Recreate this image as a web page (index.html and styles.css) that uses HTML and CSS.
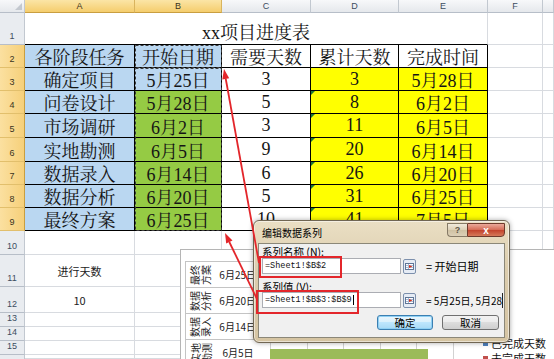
FILE: index.html
```html
<!DOCTYPE html>
<html>
<head>
    <title>xx项目进度表</title>
    <link rel="stylesheet" href="styles.css">
</head>
<body>
    <div class="sheet">
        <div class="c corner"></div><div class="c ch sel">A</div><div class="c ch sel">B</div><div class="c ch">C</div><div class="c ch">D</div><div class="c ch">E</div><div class="c ch">F</div><div class="c ch"></div>

        <div class="c rh">1</div><div class="c title">xx项目进度表</div><div class="c"></div><div class="c"></div>

        <div class="c rh sel">2</div><div class="c t blue">各阶段任务</div><div class="c t blue">开始日期</div><div class="c t">需要天数</div><div class="c t">累计天数</div><div class="c t">完成时间</div><div class="c"></div><div class="c"></div>

        <div class="c rh sel">3</div><div class="c t blue">确定项目</div><div class="c t blue">5月25日</div><div class="c t">3</div><div class="c t yel">3</div><div class="c t yel">5月28日</div><div class="c"></div><div class="c"></div>

        <div class="c rh sel">4</div><div class="c t blue">问卷设计</div><div class="c t green">5月28日</div><div class="c t">5</div><div class="c t yel err">8</div><div class="c t yel">6月2日</div><div class="c"></div><div class="c"></div>

        <div class="c rh sel">5</div><div class="c t blue">市场调研</div><div class="c t green">6月2日</div><div class="c t">3</div><div class="c t yel err">11</div><div class="c t yel">6月5日</div><div class="c"></div><div class="c"></div>

        <div class="c rh sel">6</div><div class="c t blue">实地勘测</div><div class="c t green">6月5日</div><div class="c t">9</div><div class="c t yel err">20</div><div class="c t yel">6月14日</div><div class="c"></div><div class="c"></div>

        <div class="c rh sel">7</div><div class="c t blue">数据录入</div><div class="c t green">6月14日</div><div class="c t">6</div><div class="c t yel err">26</div><div class="c t yel">6月20日</div><div class="c"></div><div class="c"></div>

        <div class="c rh sel">8</div><div class="c t blue">数据分析</div><div class="c t green">6月20日</div><div class="c t">5</div><div class="c t yel err">31</div><div class="c t yel">6月25日</div><div class="c"></div><div class="c"></div>

        <div class="c rh sel">9</div><div class="c t blue">最终方案</div><div class="c t green">6月25日</div><div class="c t">10</div><div class="c t yel err">41</div><div class="c t yel">7月5日</div><div class="c"></div><div class="c"></div>

        <div class="c rh">10</div><div class="c"></div><div class="c"></div><div class="c"></div><div class="c"></div><div class="c"></div><div class="c"></div><div class="c"></div>

        <div class="c rh">11</div><div class="c sm">进行天数</div><div class="c"></div><div class="c"></div><div class="c"></div><div class="c"></div><div class="c"></div><div class="c"></div>

        <div class="c rh">12</div><div class="c sm">10</div><div class="c"></div><div class="c"></div><div class="c"></div><div class="c"></div><div class="c"></div><div class="c"></div>

        <div class="c rh">13</div><div class="c"></div><div class="c"></div><div class="c"></div><div class="c"></div><div class="c"></div><div class="c"></div><div class="c"></div>
        <div class="c rh">14</div><div class="c"></div><div class="c"></div><div class="c"></div><div class="c"></div><div class="c"></div><div class="c"></div><div class="c"></div>
        <div class="c rh">15</div><div class="c"></div><div class="c"></div><div class="c"></div><div class="c"></div><div class="c"></div><div class="c"></div><div class="c"></div>
        <div class="c rh last"></div><div class="c"></div><div class="c"></div><div class="c"></div><div class="c"></div><div class="c"></div><div class="c"></div><div class="c"></div>
    </div>

    <!-- chart that sits on the sheet -->
    <div class="chart">
        <div class="cats">
            <div class="cat"><div class="cat-name"><div class="rot">最终方案</div></div><div class="cat-date">6月25日</div></div>
            <div class="cat"><div class="cat-name"><div class="rot">数据分析</div></div><div class="cat-date">6月20日</div></div>
            <div class="cat"><div class="cat-name"><div class="rot">数据录入</div></div><div class="cat-date">6月14日</div></div>
            <div class="cat"><div class="cat-name"><div class="rot">实地勘测</div></div><div class="cat-date">6月5日</div></div>
        </div>
        <div class="plot">
            <div class="grid-lines">
                <div class="bar-row"></div>
                <div class="bar-row"></div>
                <div class="bar-row"></div>
                <div class="bar-row"><div class="bar" style="width: 158px"></div></div>
            </div>
        </div>
        <div class="legend">
            <div class="leg"><span class="mark blue-mark"></span>已完成天数</div>
            <div class="leg"><span class="mark red-mark"></span>未完成天数</div>
        </div>
    </div>

    <!-- edit series dialog -->
    <div class="dialog">
        <div class="dlg-title">
            <span>编辑数据系列</span>
            <div class="dlg-btns">
                <div class="btn-help">?</div>
                <div class="btn-close">x</div>
            </div>
        </div>
        <div class="dlg-body">
            <div class="lbl">系列名称 (<u>N</u>):</div>
            <div class="field-row">
                <div class="field">=Sheet1!$B$2</div>
                <div class="ref-btn">
                    <svg width="13" height="15" viewBox="0 0 13 15"><rect x="0.5" y="0.5" width="12" height="14" rx="1.5" fill="#e6ecf5" stroke="#7d90ad"/><rect x="2.5" y="4.5" width="8" height="6" fill="#fff" stroke="#5f7697"/><path d="M3 6.5h7M3 8.5h7M5.5 5v5" stroke="#a9b9d2"/><path d="M6 6l3.5 1.5L6 9z" fill="#d8301c"/></svg>
                </div>
                <div class="value">= 开始日期</div>
            </div>
            <div class="lbl lbl2">系列值 (<u>V</u>):</div>
            <div class="field-row">
                <div class="field">=Sheet1!$B$3:$B$9<span class="caret"></span></div>
                <div class="ref-btn">
                    <svg width="13" height="15" viewBox="0 0 13 15"><rect x="0.5" y="0.5" width="12" height="14" rx="1.5" fill="#e6ecf5" stroke="#7d90ad"/><rect x="2.5" y="4.5" width="8" height="6" fill="#fff" stroke="#5f7697"/><path d="M3 6.5h7M3 8.5h7M5.5 5v5" stroke="#a9b9d2"/><path d="M6 6l3.5 1.5L6 9z" fill="#d8301c"/></svg>
                </div>
                <div class="value clip">= 5月25日, 5月28日, 6月2日</div>
            </div>
            <div class="dlg-actions">
                <button class="push focus">确定</button>
                <button class="push">取消</button>
            </div>
        </div>
    </div>

    <!-- selection marquee, highlight boxes and arrows -->
    <svg class="marks" width="554" height="359" viewBox="0 0 554 359">
        <rect x="135.5" y="45.5" width="86" height="22" fill="none" stroke="#3a3a3a" stroke-dasharray="3 2"/>
        <rect x="135.5" y="68.5" width="86" height="162" fill="none" stroke="#3a3a3a" stroke-dasharray="3 2"/>
        <rect x="260" y="257" width="81" height="20" fill="none" stroke="#e3262b" stroke-width="2"/>
        <rect x="257" y="291" width="101" height="22" fill="none" stroke="#e3262b" stroke-width="2"/>
        <line x1="259" y1="263" x2="225.7" y2="78.5" stroke="#e3262b" stroke-width="1.8"/>
        <polygon points="224,69 229.2,78.3 222.3,79.5" fill="#e3262b"/>
        <line x1="257" y1="299" x2="229.3" y2="242" stroke="#e3262b" stroke-width="1.8"/>
        <polygon points="225,233 232.5,240.5 226.2,243.5" fill="#e3262b"/>
    </svg>
</body>
</html>
```

FILE: styles.css
```css
body {
    margin: 0;
    background: #fff;
    overflow: hidden;
    font-family: "Liberation Serif", "Noto Serif CJK SC", "Noto Sans CJK SC", serif;
}

.sheet {
    display: grid;
    grid-template-columns: 25px 110px 87px 89px 88px 89px 55px 11px;
    grid-template-rows: 13px 32px 23px 23px 23px 24px 24px 23px 23px 23px 24px 32px 26px 14px 14px 14px 4px;
    width: 554px;
    height: 359px;
    overflow: hidden;
}

.c {
    box-sizing: border-box;
    position: relative;
    display: flex;
    align-items: center;
    justify-content: center;
    border-right: 1px solid #d8dbe0;
    border-bottom: 1px solid #d8dbe0;
    font-size: 18px;
    color: #151515;
    white-space: nowrap;
}

/* headers */
.corner, .ch, .rh {
    font-family: "Liberation Sans", sans-serif;
    font-size: 9px;
    color: #3d4d60;
    background: linear-gradient(#f7f8fa, #e5e8ec);
    border-right-color: #c2c8d0;
    border-bottom-color: #b7bec8;
}

.corner::after {
    content: "";
    position: absolute;
    right: 2px;
    bottom: 2px;
    border-left: 7px solid transparent;
    border-bottom: 7px solid #c3c8cf;
}

.ch.sel {
    background: linear-gradient(#fbe5a6, #f5cd6d);
    border-right-color: #d9b45e;
    border-bottom-color: #c99e40;
    color: #3a3320;
}

.rh {
    align-items: flex-end;
    padding-bottom: 2px;
    line-height: 11px;
    background: #e9ecf0;
}

.rh.last {
    border-bottom: none;
}

.rh.sel {
    background: linear-gradient(to right, #fbe0a0, #f6d07a);
    border-right-color: #c99e40;
    border-bottom-color: #e2bf6c;
    color: #3a3320;
}

/* table cells */
.title {
    grid-column: span 5;
    border-bottom-color: #000;
    padding-top: 4px;
}

.t {
    border-right-color: #000;
    border-bottom-color: #000;
}

.blue {
    background: #bad7f1;
}

.green {
    background: #95cb44;
}

.yel {
    background: #ffff00;
}

.err::before {
    content: "";
    position: absolute;
    left: 0;
    top: 0;
    border-top: 4px solid #1f7a34;
    border-right: 4px solid transparent;
}

.sm {
    font-family: "Noto Sans CJK SC", sans-serif;
    font-size: 11px;
    color: #222;
}

/* chart */
.chart {
    position: absolute;
    left: 180px;
    top: 249px;
    width: 374px;
    height: 110px;
    box-sizing: border-box;
    display: flex;
    padding: 11px 0 0 4px;
    background: #fff;
    border: 1px solid #b5b5b5;
    border-right: none;
    border-bottom: none;
    overflow: hidden;
    font-family: "Noto Sans CJK SC", sans-serif;
}

.cats {
    width: 71px;
    border-left: 1px solid #c4c4c4;
    box-sizing: border-box;
}

.cat {
    display: flex;
    height: 26px;
    box-sizing: border-box;
    border-top: 1px solid #c4c4c4;
}

.cat-name {
    width: 29px;
    display: flex;
    align-items: center;
    justify-content: center;
}

.rot {
    width: 22px;
    font-size: 10px;
    line-height: 11px;
    text-align: center;
    color: #222;
    transform: rotate(-90deg);
}

.cat-date {
    flex: 1;
    display: flex;
    align-items: center;
    justify-content: center;
    padding-left: 5px;
    font-size: 10px;
    color: #222;
    white-space: nowrap;
}

.plot {
    width: 214px;
    padding-left: 14px;
    box-sizing: border-box;
}

.grid-lines {
    width: 200px;
    height: 100%;
    background: repeating-linear-gradient(to right, #d2d2d2 0 1px, transparent 1px 36.6px);
}

.bar-row {
    height: 26px;
    padding-top: 10px;
    box-sizing: border-box;
}

.bar {
    height: 14px;
    background: #9bbb59;
}

.legend {
    padding: 75px 0 0 13px;
}

.leg {
    display: flex;
    align-items: center;
    font-size: 11px;
    line-height: 15px;
    color: #111;
    white-space: nowrap;
}

.mark {
    width: 5px;
    height: 5px;
    margin-right: 3px;
}

.blue-mark {
    background: #4f81bd;
}

.red-mark {
    background: #c0504d;
}

/* dialog */
.dialog {
    position: absolute;
    left: 253px;
    top: 220px;
    width: 257px;
    height: 123px;
    box-sizing: border-box;
    border: 1px solid #706653;
    border-radius: 6px;
    background: linear-gradient(#eadfc4, #dccdae 40%, #d5c4a2);
    box-shadow: 0 0 5px rgba(0, 0, 0, 0.35), inset 0 0 0 1px rgba(255, 255, 255, 0.5);
    font-family: "Noto Sans CJK SC", sans-serif;
    font-size: 10.5px;
    color: #000;
}

.dlg-title {
    height: 22px;
    display: flex;
    align-items: center;
    padding-left: 8px;
    font-size: 10px;
}

.dlg-btns {
    display: flex;
    margin-left: auto;
    margin-right: 4px;
    align-self: flex-start;
    margin-top: 2px;
}

.btn-help, .btn-close {
    height: 14px;
    box-sizing: border-box;
    display: flex;
    align-items: center;
    justify-content: center;
    font-family: "Liberation Sans", sans-serif;
    font-size: 9px;
    font-weight: bold;
}

.btn-help {
    width: 20px;
    border: 1px solid #857a66;
    border-right: none;
    border-radius: 0 0 0 4px;
    background: linear-gradient(#f1eadb, #dcd0b6 50%, #cfc1a3 50%, #dcd0b8);
    color: #5d5648;
}

.btn-close {
    width: 38px;
    border: 1px solid #6e3a2c;
    border-radius: 0 0 4px 0;
    background: linear-gradient(#eaaa9a, #d46b55 50%, #c2412b 50%, #d57959);
    color: #fff;
    font-size: 10px;
}

.dlg-body {
    margin: 0 4px;
    height: 95px;
    box-sizing: border-box;
    padding: 2px 0 0 3px;
    background: #f0f0f0;
    border: 1px solid #8b8778;
}

.lbl {
    line-height: 12px;
}

.lbl2 {
    margin-top: 7px;
    line-height: 11px;
}

.field-row {
    display: flex;
    align-items: center;
    height: 16px;
}

.field {
    width: 139px;
    height: 16px;
    box-sizing: border-box;
    display: flex;
    align-items: center;
    padding-left: 2px;
    background: #fff;
    border: 1px solid #abadb3;
    font-family: "Liberation Mono", monospace;
    font-size: 8.5px;
    color: #111;
}

.caret {
    width: 0;
    height: 10px;
    border-left: 1px solid #000;
    margin-left: 1px;
}

.ref-btn {
    margin-left: 2px;
    height: 15px;
}

.value {
    margin-left: 10px;
    font-size: 11px;
    white-space: nowrap;
}

.clip {
    width: 77px;
    overflow: hidden;
    font-size: 10px;
    border-right: 1px solid #222;
    box-sizing: border-box;
}

.dlg-actions {
    display: flex;
    justify-content: flex-end;
    gap: 9px;
    margin-top: 7px;
    padding-right: 5px;
}

.push {
    width: 57px;
    height: 15px;
    padding: 0;
    font-family: "Noto Sans CJK SC", sans-serif;
    font-size: 10.5px;
    line-height: 13px;
    color: #000;
    border: 1px solid #707070;
    border-radius: 3px;
    background: linear-gradient(#f2f2f2, #ebebeb 50%, #dddddd 50%, #cfcfcf);
}

.push.focus {
    width: 56px;
    border-color: #3c7fb1;
    box-shadow: inset 0 0 0 1px #8fd0f4;
    background: linear-gradient(#eaf6fd, #d9f0fc 50%, #bee6fd 50%, #a7d9f5);
}

.marks {
    position: absolute;
    left: 0;
    top: 0;
    pointer-events: none;
}
```
